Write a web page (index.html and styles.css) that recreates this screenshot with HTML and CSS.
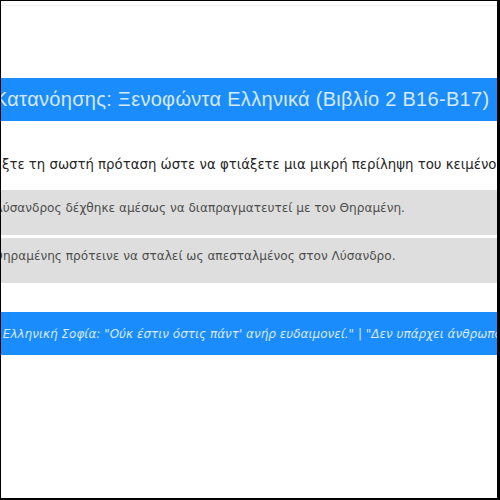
FILE: index.html
```html
<!DOCTYPE html>
<html lang="el">
<head>
<meta charset="utf-8">
<title>Κατανόησης</title>
<link rel="stylesheet" href="styles.css">
</head>
<body>
<div class="frame">
  <div class="topline"></div>
  <header class="title-bar">
    <h1 class="title">Ερωτήσεις Κατανόησης: Ξενοφώντα Ελληνικά (Βιβλίο 2 Β16-Β17)</h1>
  </header>
  <p class="instruction">Επιλέξτε τη σωστή πρόταση ώστε να φτιάξετε μια μικρή περίληψη του κειμένου.</p>
  <div class="options">
    <div class="option"><span class="opt-text first">Ο Λύσανδρος δέχθηκε αμέσως να διαπραγματευτεί με τον Θηραμένη.</span></div>
    <div class="option"><span class="opt-text second">Ο Θηραμένης πρότεινε να σταλεί ως απεσταλμένος στον Λύσανδρο.</span></div>
  </div>
  <footer class="quote-bar">
    <p class="quote">Η Ελληνική Σοφία: "Ούκ έστιν όστις πάντ' ανήρ ευδαιμονεί." | "Δεν υπάρχει άνθρωπος που να είναι ευτυχισμένος σε όλα."</p>
  </footer>
</div>
</body>
</html>
```
FILE: styles.css
```css
html, body {
  margin: 0;
  padding: 0;
  background: #000;
}
.frame {
  margin: 1px 3px 0 1px;
  height: 497px;
  background: #fff;
  overflow: hidden;
  white-space: nowrap;
}
.topline {
  height: 4px;
  border-bottom: 1px solid #eef0f2;
  margin-bottom: 72px;
}
.title-bar {
  background: #1a8cfc;
  height: 43px;
  display: flex;
  align-items: center;
  overflow: hidden;
}
.title {
  margin: 0;
  font-family: "Liberation Sans", Arial, sans-serif;
  font-weight: normal;
  font-size: 20px;
  color: #d6e9fb;
  text-indent: -110px;
  letter-spacing: 0.3px;
}
.instruction {
  margin: 34px 0 15px;
  font-family: "DejaVu Sans", sans-serif;
  font-size: 13.3px;
  line-height: 20px;
  color: #262626;
  text-indent: -35px;
  overflow: hidden;
}
.options {
  display: flex;
  flex-direction: column;
  gap: 3px;
}
.option {
  background: #dedede;
  height: 45px;
  box-sizing: border-box;
  padding-top: 8px;
  overflow: hidden;
}
.opt-text {
  display: block;
  font-family: "DejaVu Sans", sans-serif;
  font-size: 12.1px;
  line-height: 20px;
  color: #4e4e4e;
}
.opt-text.first { text-indent: -20px; }
.opt-text.second { text-indent: -21px; }
.quote-bar {
  margin-top: 29px;
  background: #1a8cfc;
  height: 43px;
  display: flex;
  align-items: center;
  overflow: hidden;
}
.quote {
  margin: 0;
  font-family: "DejaVu Sans", sans-serif;
  font-style: italic;
  font-size: 12px;
  color: #d6e9fb;
  text-indent: -11px;
}
```
